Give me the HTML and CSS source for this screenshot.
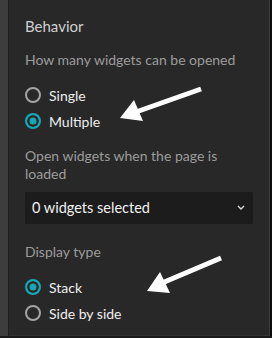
FILE: index.html
```html
<!DOCTYPE html>
<html lang="en">
<head>
    <meta charset="UTF-8">
    <title>Behavior settings</title>
    <link rel="stylesheet" href="styles.css">
</head>
<body>
    <div class="shell">
        <div class="rail"></div>
        <div class="panel">
            <h2 class="section-title">Behavior</h2>

            <div class="field">
                <div class="field-label">How many widgets can be opened</div>
                <div class="radio-group">
                    <label class="radio"><span class="dot"></span>Single</label>
                    <label class="radio checked"><span class="dot"></span>Multiple</label>
                </div>
            </div>

            <div class="field field-select">
                <div class="field-label">Open widgets when the page is loaded</div>
                <div class="select">
                    <span>0 widgets selected</span>
                    <svg class="chevron" width="8" height="5" viewBox="0 0 8 5"><path d="M1 1l3 3 3-3" fill="none" stroke="#d8d8d8" stroke-width="1.4"/></svg>
                </div>
            </div>

            <div class="field">
                <div class="field-label">Display type</div>
                <div class="radio-group">
                    <label class="radio checked"><span class="dot"></span>Stack</label>
                    <label class="radio"><span class="dot"></span>Side by side</label>
                </div>
            </div>
        </div>
        <div class="edge"></div>

        <!-- annotation arrows -->
        <svg class="arrows" width="272" height="338" viewBox="0 0 272 338">
            <line x1="201" y1="89" x2="136" y2="112" stroke="#fff" stroke-width="5"/>
            <polygon points="120,118 134,100 143,121" fill="#fff"/>
            <line x1="221" y1="258" x2="162" y2="283" stroke="#fff" stroke-width="5"/>
            <polygon points="147,291 160,272 170,293" fill="#fff"/>
        </svg>
    </div>
</body>
</html>
```

FILE: styles.css
```css
* {
    box-sizing: border-box;
}
body {
    margin: 0;
    background-color: #0c0c0c;
    font-family: Lato, 'Open Sans', sans-serif;
}
.shell {
    position: relative;
    display: flex;
    width: 272px;
    height: 338px;
    border-bottom: 2px solid #1a1a1a;
}
.rail {
    width: 9px;
    background-color: #3d3d3d;
    border-right: 1px solid #1f1f1f;
}
.panel {
    flex: 1;
    background-color: #282828;
    border-right: 1px solid #3a3a3a;
    border-bottom: 1px solid #333;
    padding: 17px 16px 0 16px;
}
.edge {
    width: 2px;
    background-color: #0c0c0c;
}
.section-title {
    margin: 0 0 16px 0;
    font-size: 15px;
    line-height: 18px;
    font-weight: normal;
    color: #cfcfcf;
}
.field {
    margin-bottom: 13px;
}
.field-select {
    margin-bottom: 19px;
}
.field-label {
    font-size: 14px;
    line-height: 18px;
    color: #9c9c9c;
    margin-bottom: 8px;
}
.field-select .field-label {
    margin-bottom: 9px;
}
.radio-group {
    padding-top: 5px;
}
.radio {
    display: flex;
    align-items: center;
    height: 26px;
    font-size: 14px;
    color: #efefef;
}
.dot {
    width: 16px;
    height: 16px;
    border: 2px solid #a4a4a4;
    border-radius: 50%;
    margin-right: 8px;
}
.radio.checked .dot {
    border-color: #18a8b4;
    background-color: #18a8b4;
    box-shadow: inset 0 0 0 2.5px #282828;
}
.select {
    display: flex;
    align-items: center;
    justify-content: space-between;
    height: 32px;
    padding: 0 8px 2px 7px;
    background-color: #1c1c1c;
    border-radius: 2px;
    font-size: 14.5px;
    color: #f2f2f2;
}
.arrows {
    position: absolute;
    left: 0;
    top: 0;
}
```
